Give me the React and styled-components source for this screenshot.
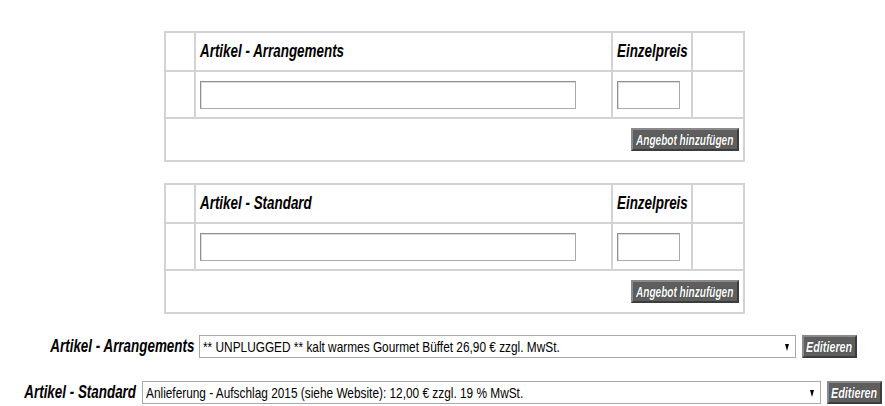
import React from "react";
import styled, { createGlobalStyle } from "styled-components";

const GlobalStyle = createGlobalStyle`
  html, body {
    margin: 0;
    padding: 0;
    background: #ffffff;
    overflow: hidden;
  }
  body {
    font-family: "Liberation Sans Narrow", "Arial Narrow", "Liberation Sans", Arial, sans-serif;
    color: #000000;
  }
`;

const Narrow = styled.span`
  display: inline-block;
  white-space: nowrap;
  transform: scaleX(${(p) => p.$scale || 0.745});
  transform-origin: ${(p) => p.$origin || "left"} center;
`;

const Page = styled.div`
  width: 885px;
  box-sizing: border-box;
  padding: 31px 0 0 23px;
  display: flex;
  flex-direction: column;
  align-items: center;
`;

const Table = styled.table`
  border-collapse: collapse;
  width: 579px;
  margin-bottom: ${(p) => p.$gap || 0}px;
  table-layout: fixed;
`;

const Cell = styled.td`
  border: 2px solid #d3d3d3;
  padding: 0 0 0 4px;
  height: ${(p) => p.$h || 40}px;
  vertical-align: middle;
  text-align: ${(p) => p.$align || "left"};
  box-sizing: border-box;
`;

const HeadText = styled(Narrow)`
  font-weight: bold;
  font-style: italic;
  font-size: 18px;
`;

const TextInput = styled.input`
  box-sizing: border-box;
  width: ${(p) => p.$w}px;
  height: 28px;
  border: 1px solid #a9a9a9;
  border-top-color: #8f8f8f;
  border-left-color: #8f8f8f;
  box-shadow: inset 1px 1px 0 #dcdcdc;
  padding: 2px 4px;
  font: inherit;
  margin: 0;
  display: block;
`;

const DarkButton = styled.button`
  display: inline-flex;
  align-items: center;
  justify-content: center;
  box-sizing: border-box;
  width: ${(p) => p.$w}px;
  height: 23px;
  background: #5e5e5e;
  color: #ffffff;
  border: 2px solid #8a8a8a;
  border-right-color: #3c3c3c;
  border-bottom-color: #3c3c3c;
  font-family: inherit;
  font-weight: bold;
  font-style: italic;
  font-size: ${(p) => p.$size || 14}px;
  padding: 0;
  margin: 0 ${(p) => p.$right || 0}px 0 0;
  cursor: pointer;
  text-shadow: 0 0 1px #222;
  vertical-align: middle;
`;

const PickerRow = styled.div`
  display: flex;
  align-items: center;
  margin-top: ${(p) => p.$top}px;
`;

const PickerLabel = styled.label`
  display: flex;
  justify-content: flex-end;
  width: ${(p) => p.$w}px;
  margin-right: 5px;
  font-weight: bold;
  font-style: italic;
  font-size: 18px;
`;

const SelectBox = styled.div`
  position: relative;
  box-sizing: border-box;
  width: ${(p) => p.$w}px;
  height: 23px;
  margin-right: 6px;
  border: 1px solid #a9a9a9;
  background: #ffffff;
  font-size: 15px;
  line-height: 21px;
  padding-left: 3px;
  overflow: hidden;
`;

const Arrow = styled.span`
  position: absolute;
  right: 6px;
  top: 8px;
  width: 0;
  height: 0;
  border-left: 2.5px solid transparent;
  border-right: 2.5px solid transparent;
  border-top: 7px solid #000;
  pointer-events: none;
`;

function OfferTable({ title, gap }) {
  return (
    <Table $gap={gap}>
      <colgroup>
        <col style={{ width: 30 }} />
        <col style={{ width: 417 }} />
        <col style={{ width: 80 }} />
        <col style={{ width: 52 }} />
      </colgroup>
      <tbody>
        <tr>
          <Cell $h={39} />
          <Cell $h={39}>
            <HeadText>{title}</HeadText>
          </Cell>
          <Cell $h={39}>
            <HeadText>Einzelpreis</HeadText>
          </Cell>
          <Cell $h={39} />
        </tr>
        <tr>
          <Cell $h={47} />
          <Cell $h={47}>
            <TextInput type="text" $w={376} />
          </Cell>
          <Cell $h={47}>
            <TextInput type="text" $w={63} />
          </Cell>
          <Cell $h={47} />
        </tr>
        <tr>
          <Cell $h={43} colSpan={4} $align="right">
            <DarkButton $w={108} $size={14} $right={4}>
              <Narrow $origin="center" $scale={0.72}>Angebot hinzufügen</Narrow>
            </DarkButton>
          </Cell>
        </tr>
      </tbody>
    </Table>
  );
}

function Picker({ label, labelWidth, value, width, top }) {
  return (
    <PickerRow $top={top}>
      <PickerLabel $w={labelWidth}>
        <Narrow $origin="right">{label}</Narrow>
      </PickerLabel>
      <SelectBox $w={width} role="combobox">
        <Narrow $scale={0.79}>{value}</Narrow>
        <Arrow />
      </SelectBox>
      <DarkButton $w={55} $size={15}>
        <Narrow $origin="center" $scale={0.72}>Editieren</Narrow>
      </DarkButton>
    </PickerRow>
  );
}

export default function App() {
  return (
    <>
      <GlobalStyle />
      <Page>
        <OfferTable title="Artikel - Arrangements" gap={21} />
        <OfferTable title="Artikel - Standard" gap={0} />
        <Picker
          top={21}
          label="Artikel - Arrangements"
          labelWidth={143}
          width={597}
          value="** UNPLUGGED ** kalt warmes Gourmet Büffet 26,90 € zzgl. MwSt."
        />
        <Picker
          top={23}
          label="Artikel - Standard"
          labelWidth={110}
          width={679}
          value="Anlieferung - Aufschlag 2015 (siehe Website): 12,00 € zzgl. 19 % MwSt."
        />
      </Page>
    </>
  );
}
